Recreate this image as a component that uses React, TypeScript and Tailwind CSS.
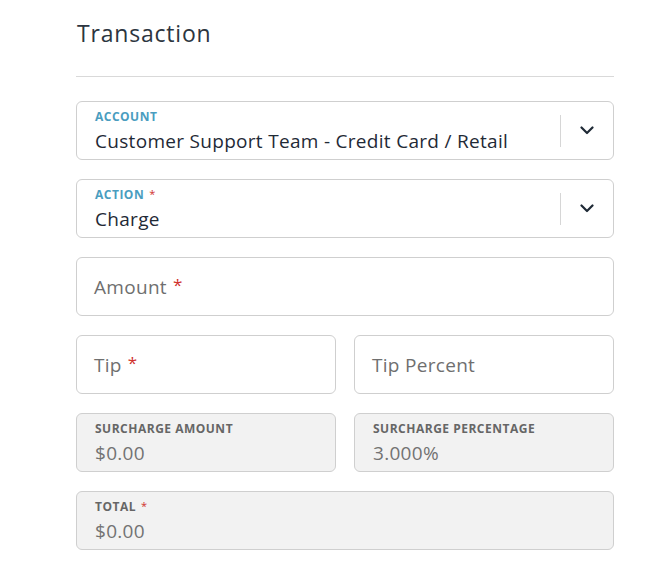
const font = { fontFamily: '"Open Sans", "Lato", sans-serif' };

function Chevron() {
  return (
    <svg width="14" height="9" viewBox="0 0 14 9" fill="none">
      <path d="M1.5 1.5 L7 7 L12.5 1.5" stroke="#1f2a36" strokeWidth="2.2" strokeLinecap="round" strokeLinejoin="round" />
    </svg>
  );
}

function Req({ big }: { big?: boolean }) {
  return big ? (
    <span className="text-[#d0312d] ml-[6px] text-[17px] font-normal relative -top-[3px]">*</span>
  ) : (
    <span className="text-[#d0312d] ml-[5px] text-[11px] font-normal relative -top-[1px]">*</span>
  );
}

function SelectField({ label, value, required }: { label: string; value: string; required?: boolean }) {
  return (
    <div className="h-[59px] flex items-center rounded-md border border-[#cfcfcf] bg-white">
      <div className="flex-1 pl-[18px] pt-[2px] flex flex-col">
        <div className="text-[12px] font-bold tracking-[0.5px] text-[#4a9dbf] leading-[14px]">
          {label}
          {required && <Req />}
        </div>
        <div className="text-[19px] tracking-[0.3px] text-[#1f2a36] leading-[24px] mt-[5px]">{value}</div>
      </div>
      <div className="w-px h-[32px] bg-[#d6d6d6]" />
      <div className="w-[52px] flex items-center justify-center">
        <Chevron />
      </div>
    </div>
  );
}

function InputField({ placeholder, required }: { placeholder: string; required?: boolean }) {
  return (
    <div className="h-[59px] flex items-center rounded-md border border-[#cfcfcf] bg-white pl-[17px]">
      <span className="text-[19px] tracking-[0.3px] text-[#6f6f6f] leading-[24px] mt-[1px]">
        {placeholder}
        {required && <Req big />}
      </span>
    </div>
  );
}

function ReadOnlyField({ label, value, required }: { label: string; value: string; required?: boolean }) {
  return (
    <div className="h-[59px] flex flex-col justify-center rounded-md border border-[#cfcfcf] bg-[#f2f2f2] pl-[18px] pt-[2px]">
      <div className="text-[12px] font-bold tracking-[0.5px] text-[#666] leading-[14px]">
        {label}
        {required && <Req />}
      </div>
      <div className="text-[19px] tracking-[0.3px] text-[#737373] leading-[24px] mt-[5px]">{value}</div>
    </div>
  );
}

export default function App() {
  return (
    <div className="w-[666px] h-[568px] bg-white" style={font}>
      <div className="ml-[76px] w-[538px] pt-[19px]">
        <h1 className="text-[23px] text-[#2c3540] tracking-[0.8px] leading-[28px] pl-[1px]">Transaction</h1>
        <div className="h-px bg-[#d9d9d9] mt-[29px] mb-[24px]" />
        <div className="flex flex-col gap-[19px]">
          <SelectField label="ACCOUNT" value="Customer Support Team - Credit Card / Retail" />
          <SelectField label="ACTION" value="Charge" required />
          <InputField placeholder="Amount" required />
          <div className="grid grid-cols-2 gap-[18px]">
            <InputField placeholder="Tip" required />
            <InputField placeholder="Tip Percent" />
          </div>
          <div className="grid grid-cols-2 gap-[18px]">
            <ReadOnlyField label="SURCHARGE AMOUNT" value="$0.00" />
            <ReadOnlyField label="SURCHARGE PERCENTAGE" value="3.000%" />
          </div>
          <ReadOnlyField label="TOTAL" value="$0.00" required />
        </div>
      </div>
    </div>
  );
}
